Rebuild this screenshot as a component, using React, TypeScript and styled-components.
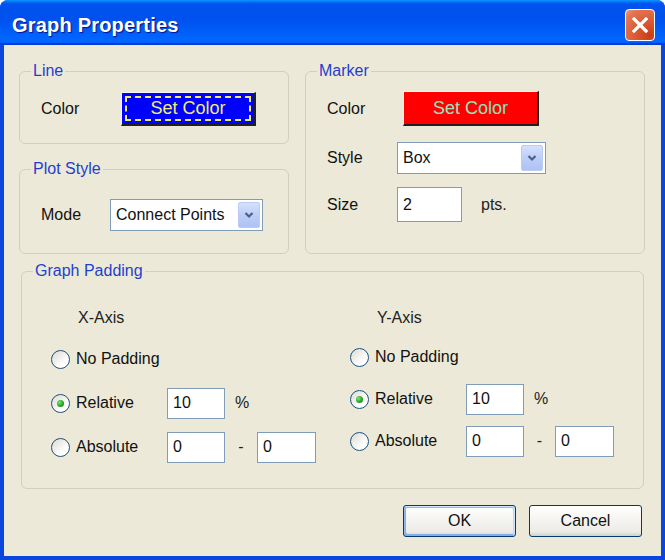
import * as React from 'react'
import styled, { createGlobalStyle } from 'styled-components'

const GlobalStyle = createGlobalStyle`
  html, body {
    margin: 0;
    padding: 0;
    background: #ffffff;
  }
  body {
    font-family: 'Liberation Sans', Arial, sans-serif;
  }
`

const Window = styled.div`
  width: 665px;
  height: 560px;
  box-sizing: border-box;
  display: flex;
  flex-direction: column;
  border-radius: 8px 8px 0 0;
  overflow: hidden;
  background: #0a45de;
`

const TitleBar = styled.div`
  height: 45px;
  box-sizing: border-box;
  flex-shrink: 0;
  display: flex;
  align-items: center;
  justify-content: space-between;
  padding: 5px 10px 0 12px;
  background: linear-gradient(
    to bottom,
    #0997ff 0%,
    #0053ee 8%,
    #0050ee 40%,
    #0066ff 88%,
    #0066ff 93%,
    #005bff 95%,
    #003dd7 96%,
    #003dd7 100%
  );
`

const Title = styled.div`
  color: #ffffff;
  font-weight: bold;
  font-size: 20px;
  letter-spacing: 0.2px;
  text-shadow: 1px 1px 1px #0f1089;
`

const CloseButton = styled.div`
  width: 30px;
  height: 32px;
  box-sizing: border-box;
  border: 1px solid #ffffff;
  border-radius: 4px;
  background: radial-gradient(
    circle at 85% 85%,
    #c93d15 0%,
    #d9552e 35%,
    #e4754f 80%,
    #f09a7c 100%
  );
  display: flex;
  align-items: center;
  justify-content: center;
`

const Body = styled.div`
  flex: 1;
  margin: 0 4px 4px 4px;
  background: #ece9d8;
  padding: 17px 17px 0 15px;
  display: flex;
  flex-direction: column;
`

const TopGrid = styled.div`
  display: grid;
  grid-template-columns: 270px 340px;
  column-gap: 16px;
  height: 192px;
`

const LeftCol = styled.div`
  display: flex;
  flex-direction: column;
  gap: 16px;
`

const Group = styled.fieldset<{ $h?: number; $pt: number }>`
  margin: 0;
  min-width: 0;
  box-sizing: border-box;
  border: 1px solid #d0d0bf;
  border-radius: 6px;
  padding: ${({ $pt }) => $pt}px 0 0 0;
  ${({ $h }) => ($h ? `height: ${$h}px;` : 'flex: 1;')}
`

const PaddingGroup = styled(Group)`
  margin: 8px 0 0 2px;
`

const Legend = styled.legend`
  color: #1f3fcf;
  font-size: 16px;
  line-height: 18px;
  padding: 0 2px;
  margin-left: 11px;
`

const GroupBody = styled.div<{ $pl: number }>`
  padding-left: ${({ $pl }) => $pl}px;
`

const Row = styled.div<{ $gap?: number }>`
  display: flex;
  align-items: center;
  margin-top: ${({ $gap }) => $gap || 0}px;
`

const Label = styled.div<{ $w: number }>`
  width: ${({ $w }) => $w}px;
  flex-shrink: 0;
  font-size: 16px;
  color: #111;
`

const ColorButton = styled.div<{ $bg: string; $fg: string; $w: number; $h: number; $focus?: boolean }>`
  position: relative;
  width: ${({ $w }) => $w}px;
  height: ${({ $h }) => $h}px;
  box-sizing: border-box;
  background: ${({ $bg }) => $bg};
  color: ${({ $fg }) => $fg};
  font-size: 18px;
  display: flex;
  align-items: center;
  justify-content: center;
  border-right: 2px solid #202020;
  border-bottom: 2px solid #202020;
  border-top: 1px solid #f4f4f4;
  border-left: 1px solid #f4f4f4;
  ${({ $focus }) =>
    $focus &&
    `&::after {
      content: '';
      position: absolute;
      inset: 3px;
      border: 2px dashed #eeee60;
    }`}
`

const Select = styled.div<{ $w: number }>`
  width: ${({ $w }) => $w}px;
  height: 32px;
  box-sizing: border-box;
  border: 1px solid #7f9db9;
  background: #ffffff;
  display: flex;
  align-items: center;
  justify-content: space-between;
  padding: 0 2px 0 5px;
  font-size: 16px;
  color: #111;
`

const ArrowBox = styled.div`
  width: 22px;
  height: 26px;
  box-sizing: border-box;
  border-radius: 2px;
  border: 1px solid #bccbf4;
  background: linear-gradient(to bottom, #d5e1fd 0%, #bccdf8 50%, #aec3f4 100%);
  display: flex;
  align-items: center;
  justify-content: center;
`

const TextInput = styled.div<{ $w: number; $h?: number }>`
  width: ${({ $w }) => $w}px;
  height: ${({ $h }) => $h || 31}px;
  box-sizing: border-box;
  border: 1px solid #7f9db9;
  background: #ffffff;
  display: flex;
  align-items: center;
  padding-left: 5px;
  font-size: 16px;
  color: #111;
  flex-shrink: 0;
`

const Unit = styled.div<{ $ml: number }>`
  margin-left: ${({ $ml }) => $ml}px;
  font-size: 16px;
  color: #222;
`

const Dash = styled.div<{ $w: number }>`
  width: ${({ $w }) => $w}px;
  text-align: center;
  font-size: 16px;
  color: #222;
`

const PaddingGrid = styled.div`
  display: grid;
  grid-template-columns: 299px 1fr;
`

const AxisCol = styled.div<{ $gap: number }>`
  display: flex;
  flex-direction: column;
  gap: ${({ $gap }) => $gap}px;
`

const AxisTitle = styled.div`
  font-size: 16px;
  line-height: 18px;
  color: #222;
  margin-left: 27px;
  margin-bottom: 4px;
`

const AxisRow = styled.div`
  height: 32px;
  display: flex;
  align-items: center;
`

const RadioLabel = styled.label`
  width: 116px;
  flex-shrink: 0;
  display: flex;
  align-items: center;
  gap: 6px;
  font-size: 16px;
  color: #111;
`

const RadioCircle = styled.span<{ $checked?: boolean }>`
  width: 19px;
  height: 19px;
  box-sizing: border-box;
  border-radius: 50%;
  border: 1px solid #1c5180;
  background: linear-gradient(135deg, #dcd9cf 0%, #ffffff 70%, #ffffff 100%);
  display: flex;
  align-items: center;
  justify-content: center;
  &::after {
    content: '';
    display: ${({ $checked }) => ($checked ? 'block' : 'none')};
    width: 7px;
    height: 7px;
    border-radius: 50%;
    background: radial-gradient(circle at 35% 35%, #7fe07f 0%, #21a121 60%, #1a7f1a 100%);
  }
`

const Footer = styled.div`
  display: flex;
  justify-content: flex-end;
  gap: 13px;
  margin-top: 16px;
  padding-right: 2px;
`

const DialogButton = styled.button<{ $default?: boolean }>`
  width: 113px;
  height: 32px;
  border: 1px solid #003c74;
  border-radius: 3px;
  background: linear-gradient(180deg, #ffffff 0%, #ecebe6 86%, #d6d0c5 100%);
  font-family: 'Liberation Sans', Arial, sans-serif;
  font-size: 16px;
  color: #111;
  padding: 0;
  ${({ $default }) =>
    $default &&
    `box-shadow: inset -1px 1px #cee7ff, inset 1px 2px #98b8ea, inset -2px 2px #bcd4f6, inset 1px -1px #89ade4, inset 2px -2px #89ade4;`}
`

const Chevron = () => (
  <svg width="10" height="8" viewBox="0 0 10 8">
    <path d="M1.5 2 L5 5.5 L8.5 2" fill="none" stroke="#4d6185" strokeWidth="2.2" />
  </svg>
)

interface AxisProps {
  title: string
  gap: number
  relDash: number
}

const AxisColumn = ({ title, gap, relDash }: AxisProps) => (
  <AxisCol $gap={gap}>
    <AxisTitle>{title}</AxisTitle>
    <AxisRow>
      <RadioLabel>
        <RadioCircle />
        No Padding
      </RadioLabel>
    </AxisRow>
    <AxisRow>
      <RadioLabel>
        <RadioCircle $checked />
        Relative
      </RadioLabel>
      <TextInput $w={58}>10</TextInput>
      <Unit $ml={10}>%</Unit>
    </AxisRow>
    <AxisRow>
      <RadioLabel>
        <RadioCircle />
        Absolute
      </RadioLabel>
      <TextInput $w={58}>0</TextInput>
      <Dash $w={relDash}>-</Dash>
      <TextInput $w={59}>0</TextInput>
    </AxisRow>
  </AxisCol>
)

export default function App() {
  return (
    <>
      <GlobalStyle />
      <Window>
        <TitleBar>
          <Title>Graph Properties</Title>
          <CloseButton>
            <svg width="18" height="18" viewBox="0 0 18 18">
              <path d="M3 3 L15 15 M15 3 L3 15" stroke="#ffffff" strokeWidth="3.2" strokeLinecap="square" />
            </svg>
          </CloseButton>
        </TitleBar>
        <Body>
          <TopGrid>
            <LeftCol>
              <Group $h={82} $pt={12}>
                <Legend>Line</Legend>
                <GroupBody $pl={21}>
                  <Row>
                    <Label $w={80}>Color</Label>
                    <ColorButton $bg="#0000ff" $fg="#eeee70" $w={135} $h={34} $focus>
                      Set Color
                    </ColorButton>
                  </Row>
                </GroupBody>
              </Group>
              <Group $pt={21}>
                <Legend>Plot Style</Legend>
                <GroupBody $pl={21}>
                  <Row>
                    <Label $w={69}>Mode</Label>
                    <Select $w={153}>
                      Connect Points
                      <ArrowBox>
                        <Chevron />
                      </ArrowBox>
                    </Select>
                  </Row>
                </GroupBody>
              </Group>
            </LeftCol>
            <Group $pt={11}>
              <Legend>Marker</Legend>
              <GroupBody $pl={21}>
                <Row>
                  <Label $w={76}>Color</Label>
                  <ColorButton $bg="#ff0000" $fg="#8fe8c0" $w={136} $h={35}>
                    Set Color
                  </ColorButton>
                </Row>
                <Row $gap={16}>
                  <Label $w={70}>Style</Label>
                  <Select $w={149}>
                    Box
                    <ArrowBox>
                      <Chevron />
                    </ArrowBox>
                  </Select>
                </Row>
                <Row $gap={13}>
                  <Label $w={70}>Size</Label>
                  <TextInput $w={65} $h={35}>
                    2
                  </TextInput>
                  <Unit $ml={19}>pts.</Unit>
                </Row>
              </GroupBody>
            </Group>
          </TopGrid>
          <PaddingGroup $h={227} $pt={29}>
            <Legend>Graph Padding</Legend>
            <GroupBody $pl={29}>
              <PaddingGrid>
                <AxisColumn title="X-Axis" gap={12} relDash={32} />
                <AxisColumn title="Y-Axis" gap={10} relDash={31} />
              </PaddingGrid>
            </GroupBody>
          </PaddingGroup>
          <Footer>
            <DialogButton $default>OK</DialogButton>
            <DialogButton>Cancel</DialogButton>
          </Footer>
        </Body>
      </Window>
    </>
  )
}
